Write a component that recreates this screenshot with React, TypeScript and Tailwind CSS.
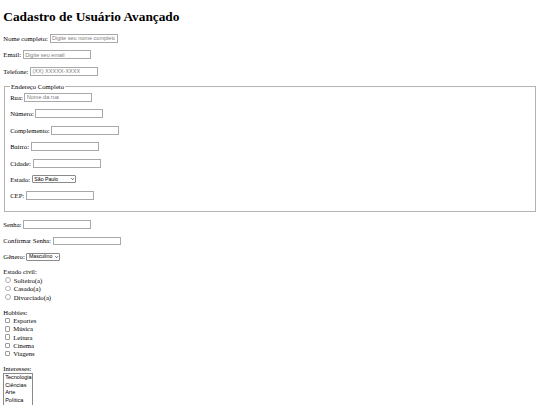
import React from 'react';

const row = 'flex items-center h-[8.89px] mb-[7.67px]';
const sans = "font-['Liberation_Sans',Arial,sans-serif]";

function TextField({ label, placeholder, type = 'text' }: { label: string; placeholder?: string; type?: string }) {
  return (
    <div className={row}>
      <label>{label}</label>
      <input
        type={type}
        placeholder={placeholder}
        className={`ml-[1.67px] h-[8.89px] w-[68px] border border-[#a9a9a9] bg-white px-[1.4px] ${sans} text-[5.56px] leading-[normal] outline-none placeholder:text-[#808080]`}
      />
    </div>
  );
}

function SelectField({ label, value, width }: { label: string; value: string; width: string }) {
  return (
    <div className="flex items-center h-[7.5px] mb-[7.67px]">
      <label>{label}</label>
      <span className="relative ml-[1.67px] inline-flex">
        <select
          defaultValue={value}
          className={`${width} h-[7.5px] appearance-none rounded-[1px] border border-[#8a8a8a] bg-white pl-[1.5px] ${sans} text-[5.2px] leading-none text-black outline-none`}
        >
          <option>{value}</option>
        </select>
        <svg
          className="pointer-events-none absolute right-[1.8px] top-[2.6px] h-[2.2px] w-[3.2px]"
          viewBox="0 0 10 7"
        >
          <path d="M1 1l4 4 4-4" stroke="#111" strokeWidth="2.4" fill="none" />
        </svg>
      </span>
    </div>
  );
}

function Radio({ label }: { label: string }) {
  return (
    <div className="flex items-center h-[8.5px]">
      <input
        type="radio"
        name="estadoCivil"
        className="ml-[2.08px] mr-[1.25px] size-[5.42px] appearance-none rounded-full border border-[#b0b0b0] bg-white"
      />
      <span className="ml-[1.67px]">{label}</span>
    </div>
  );
}

function Check({ label }: { label: string }) {
  return (
    <div className="flex items-center h-[8.2px]">
      <input
        type="checkbox"
        className="ml-[1.67px] mr-[1.25px] size-[5.42px] appearance-none rounded-[1px] border border-[#9a9a9a] bg-white"
      />
      <span className="ml-[1.67px]">{label}</span>
    </div>
  );
}

export default function App() {
  const interesses = ['Tecnologia', 'Ciências', 'Arte', 'Política', 'Educação', 'Esportes'];

  return (
    <div className="min-h-screen bg-white px-[3.33px] font-['Liberation_Serif','Times_New_Roman',serif] text-[6.67px] leading-[normal] text-black">
      <h1 className="mt-[9.3px] mb-[8.6px] text-[13.33px] font-bold leading-[normal]">Cadastro de Usuário Avançado</h1>

      <form>
        <TextField label="Nome completo:" placeholder="Digite seu nome completo" />
        <TextField label="Email:" placeholder="Digite seu email" type="email" />
        <TextField label="Telefone:" placeholder="(XX) XXXXX-XXXX" type="tel" />

        <fieldset className="mx-[0.83px] border border-[#b4b4b4] px-[5px] pt-[2.33px] pb-[4.17px]">
          <legend className="px-[0.83px] leading-[normal]">Endereço Completo</legend>
          <TextField label="Rua:" placeholder="Nome da rua" />
          <TextField label="Número:" />
          <TextField label="Complemento:" />
          <TextField label="Bairro:" />
          <TextField label="Cidade:" />
          <SelectField label="Estado:" value="São Paulo" width="w-[44px]" />
          <TextField label="CEP:" />
        </fieldset>

        <div className="h-[7.67px]" />
        <TextField label="Senha:" type="password" />
        <TextField label="Confirmar Senha:" type="password" />
        <SelectField label="Gênero:" value="Masculino" width="w-[34px]" />

        <div className="h-[7.67px] leading-[7.67px]">Estado civil:</div>
        <Radio label="Solteiro(a)" />
        <Radio label="Casado(a)" />
        <Radio label="Divorciado(a)" />

        <div className="mt-[7.67px] h-[7.67px] leading-[7.67px]">Hobbies:</div>
        <Check label="Esportes" />
        <Check label="Música" />
        <Check label="Leitura" />
        <Check label="Cinema" />
        <Check label="Viagens" />

        <div className="mt-[7.67px] h-[7.67px] leading-[7.67px]">Interesses:</div>
        <div
          role="listbox"
          className={`mt-[0.2px] h-[48px] w-[29.5px] overflow-hidden border border-[#8a8a8a] bg-white ${sans} text-[5.56px]`}
        >
          {interesses.map((i) => (
            <div key={i} className="h-[7.7px] px-[0.83px] leading-[7.7px] whitespace-nowrap">
              {i}
            </div>
          ))}
        </div>
      </form>
    </div>
  );
}
